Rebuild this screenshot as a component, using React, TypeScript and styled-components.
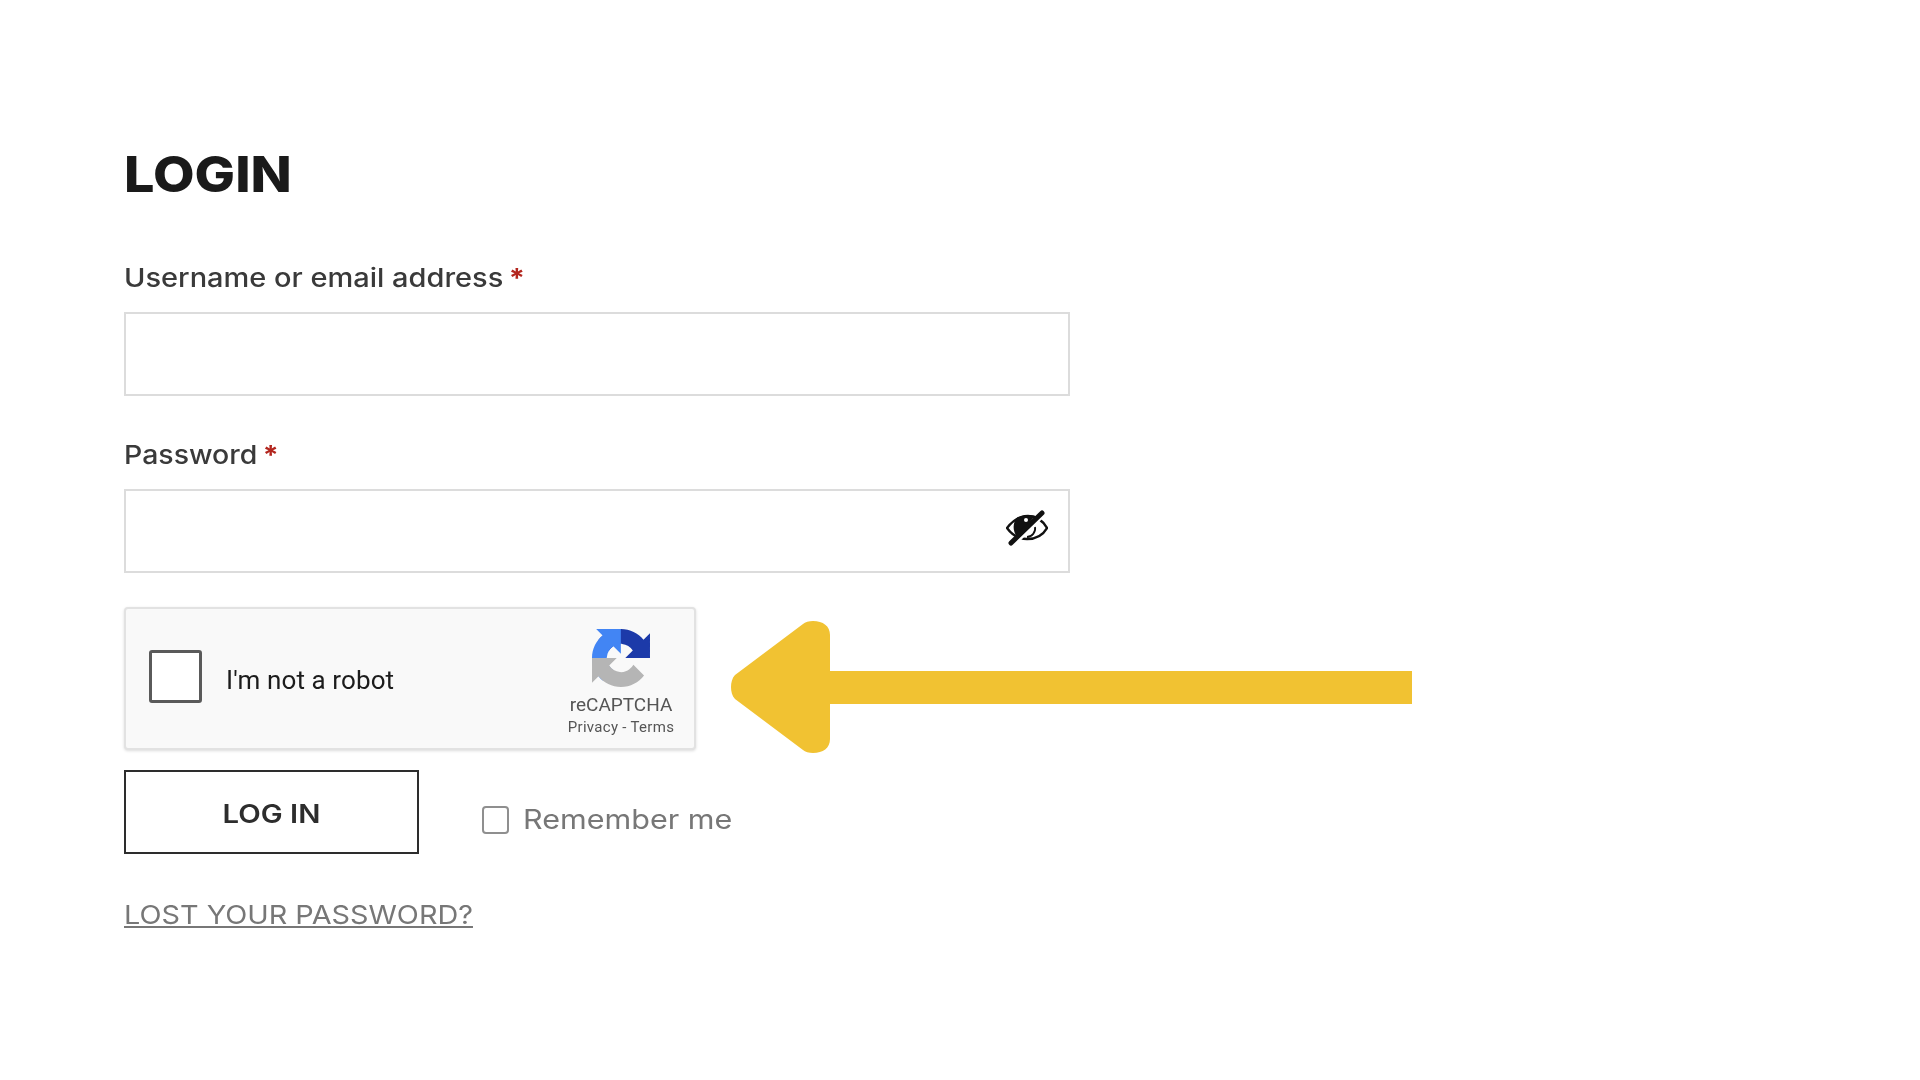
import React, { FC } from 'react'
import styled, { createGlobalStyle, css } from 'styled-components'

const GlobalStyle = createGlobalStyle`
    html, body {
        margin: 0;
        padding: 0;
        background: #ffffff;
    }
    * {
        box-sizing: border-box;
    }
`

// the form in the picture is a slightly soft, upscaled capture
const soft = css`
    filter: blur(0.55px);
`

// Montserrat isn't installed, so Inter gets widened to its proportions
const Wide = styled.span<{ $x: number; $origin?: string }>`
    display: inline-block;
    transform: scaleX(${props => props.$x});
    transform-origin: ${props => props.$origin || 'left'} center;
`

const Page = styled.main`
    width: 1920px;
    height: 1080px;
    overflow: hidden;
    padding: 151px 0 0 124px;
    font-family: Inter, "Liberation Sans", sans-serif;
`
const Title = styled.h2`
    ${soft}
    margin: 0 0 63px;
    font-size: 49px;
    line-height: 48px;
    font-weight: 800;
    color: #1a1a1a;
`
const Field = styled.div<{ $gap: number }>`
    width: 946px;
    margin-bottom: ${props => props.$gap}px;
`
const Label = styled.label`
    ${soft}
    display: block;
    margin-bottom: 18px;
    font-size: 26px;
    line-height: 32px;
    font-weight: 500;
    color: #3a3a3a;
`
const Required = styled.span`
    margin-left: -2px;
    color: #b3261e;
    font-weight: 700;
`
const InputWrap = styled.div`
    position: relative;
`
const TextInput = styled.input`
    ${soft}
    display: block;
    width: 100%;
    height: 84px;
    padding: 0 20px;
    background: #fff;
    border: 2px solid #dcdcdc;
    outline: none;
`
const EyeButton = styled.span`
    ${soft}
    position: absolute;
    top: 21px;
    right: 22px;
    display: flex;
`
const CaptchaRow = styled.div`
    display: flex;
    align-items: flex-start;
    height: 143px;
    margin: -8px 0 20px;
    gap: 35px;
`
const Captcha = styled.div`
    ${soft}
    display: flex;
    width: 572px;
    height: 143px;
    padding-left: 23px;
    background: #f9f9f9;
    border: 2px solid #e2e2e2;
    border-radius: 4px;
    box-shadow: 0 1px 3px rgba(0, 0, 0, 0.14);
    font-family: Roboto, sans-serif;
`
const CaptchaBox = styled.span`
    flex: none;
    width: 53px;
    height: 53px;
    margin-top: 41px;
    background: #fff;
    border: 3px solid #5a5a5a;
    border-radius: 3px;
`
const CaptchaText = styled.span`
    margin: 56px 0 0 24px;
    font-size: 26px;
    line-height: 30px;
    letter-spacing: 0.1px;
    color: #1c1c1c;
`
const CaptchaBrand = styled.div`
    display: flex;
    flex-direction: column;
    align-items: center;
    width: 110px;
    margin: 20px 18px 0 auto;
`
const BrandName = styled.span`
    margin-top: 7px;
    font-size: 19px;
    line-height: 22px;
    color: #555;
`
const BrandLinks = styled.span`
    margin-top: 2px;
    font-size: 15px;
    line-height: 18px;
    letter-spacing: 0.3px;
    white-space: nowrap;
    color: #555;
`
const Arrow = styled.svg`
    flex: none;
    margin-top: 14px;
`
const ActionRow = styled.div`
    display: flex;
    align-items: center;
    gap: 63px;
    margin-bottom: 45px;
`
const LoginButton = styled.button`
    ${soft}
    width: 295px;
    height: 84px;
    padding: 2px 0 0;
    background: #fff;
    border: 2px solid #2d2d2d;
    font-family: Inter, sans-serif;
    font-size: 26px;
    font-weight: 600;
    color: #2d2d2d;
`
const Remember = styled.label`
    ${soft}
    display: flex;
    align-items: center;
    gap: 14px;
    margin-top: 16px;
    font-size: 27px;
    line-height: 32px;
    color: #777;
`
const RememberBox = styled.input`
    appearance: none;
    width: 27px;
    height: 28px;
    margin: 0;
    background: #fff;
    border: 2px solid #8f8f8f;
    border-radius: 4px;
`
const LostLink = styled.a`
    ${soft}
    display: block;
    font-size: 26px;
    line-height: 32px;
    color: #777;
`
const LostText = styled(Wide)`
    text-decoration: underline;
`

const EyeSlash: FC = () => (
    <svg width="42" height="36" viewBox="0 0 42 36">
        <path d="M1 18C8 9 15 6 22 6C30 6 37 11 41 18C37 25 30 29 21 29C13 29 6 25 1 18Z" fill="none" stroke="#111" strokeWidth="2.4" />
        <path d="M11 8C16 5 23 4 29 6L11 27C6 20 7 12 11 8Z" fill="#111" />
        <circle cx="20" cy="10" r="2" fill="#fff" />
        <path d="M21 27C26 27 30 22 29 17" fill="none" stroke="#111" strokeWidth="1.8" />
        <path d="M8 33L38 3" stroke="#fff" strokeWidth="6" />
        <path d="M5 33L36 3" stroke="#111" strokeWidth="5" strokeLinecap="round" />
    </svg>
)

const CaptchaLogo: FC = () => (
    <svg width="58" height="58" viewBox="0 0 64 64">
        <path d="M64 31.955l-.033-1.37V4.687l-7.16 7.16C50.948 4.674 42.033.093 32.05.093c-10.4 0-19.622 4.96-25.458 12.64l11.736 11.86a15.55 15.55 0 0 1 4.754-5.334c2.05-1.6 4.952-2.906 8.968-2.906.485 0 .86.057 1.135.163 4.976.393 9.29 3.14 11.83 7.125l-8.307 8.307 26.29.001" fill="#1c3aa9" />
        <path d="M31.862.094l-1.37.033H4.594l7.16 7.16C4.58 13.147 0 22.06 0 32.046c0 10.4 4.96 19.622 12.64 25.458L24.5 45.768a15.55 15.55 0 0 1-5.334-4.754c-1.6-2.05-2.906-4.952-2.906-8.968 0-.485.057-.86.163-1.135.393-4.976 3.14-9.29 7.125-11.83l8.307 8.307.001-26.29" fill="#4285f4" />
        <path d="M.001 32.045l.033 1.37v25.898l7.16-7.16c5.86 7.173 14.774 11.754 24.76 11.754 10.4 0 19.622-4.96 25.458-12.64l-11.736-11.86a15.55 15.55 0 0 1-4.754 5.334c-2.05 1.6-4.952 2.906-8.968 2.906-.485 0-.86-.057-1.135-.163-4.976-.393-9.29-3.14-11.83-7.125l8.307-8.307-26.29.001" fill="#b5b5b5" />
    </svg>
)

const App: FC = () => {
    return (
        <Page>
            <GlobalStyle />
            <Title><Wide $x={1.1}>LOGIN</Wide></Title>
            <Field $gap={43}>
                <Label><Wide $x={1.115}>Username or email address <Required>*</Required></Wide></Label>
                <TextInput type="text" />
            </Field>
            <Field $gap={42}>
                <Label><Wide $x={1.095}>Password <Required>*</Required></Wide></Label>
                <InputWrap>
                    <TextInput type="password" />
                    <EyeButton><EyeSlash /></EyeButton>
                </InputWrap>
            </Field>
            <CaptchaRow>
                <Captcha>
                    <CaptchaBox />
                    <CaptchaText>I'm not a robot</CaptchaText>
                    <CaptchaBrand>
                        <CaptchaLogo />
                        <BrandName>reCAPTCHA</BrandName>
                        <BrandLinks>Privacy - Terms</BrandLinks>
                    </CaptchaBrand>
                </Captcha>
                <Arrow width="681" height="132" viewBox="0 0 681 132">
                    <path d="M681 50H99V14C99 5 92 0 82 0C78 0 74 1 72 3L4 54C1 57 0 62 0 66C0 70 1 75 4 78L72 129C74 131 78 132 82 132C92 132 99 127 99 118V83H681Z" fill="#f1c232" />
                </Arrow>
            </CaptchaRow>
            <ActionRow>
                <LoginButton><Wide $x={1.126} $origin="center">LOG IN</Wide></LoginButton>
                <Remember><RememberBox type="checkbox" /><Wide $x={1.13}>Remember me</Wide></Remember>
            </ActionRow>
            <LostLink href="#"><LostText $x={1.108}>LOST YOUR PASSWORD?</LostText></LostLink>
        </Page>
    )
}

export default App
